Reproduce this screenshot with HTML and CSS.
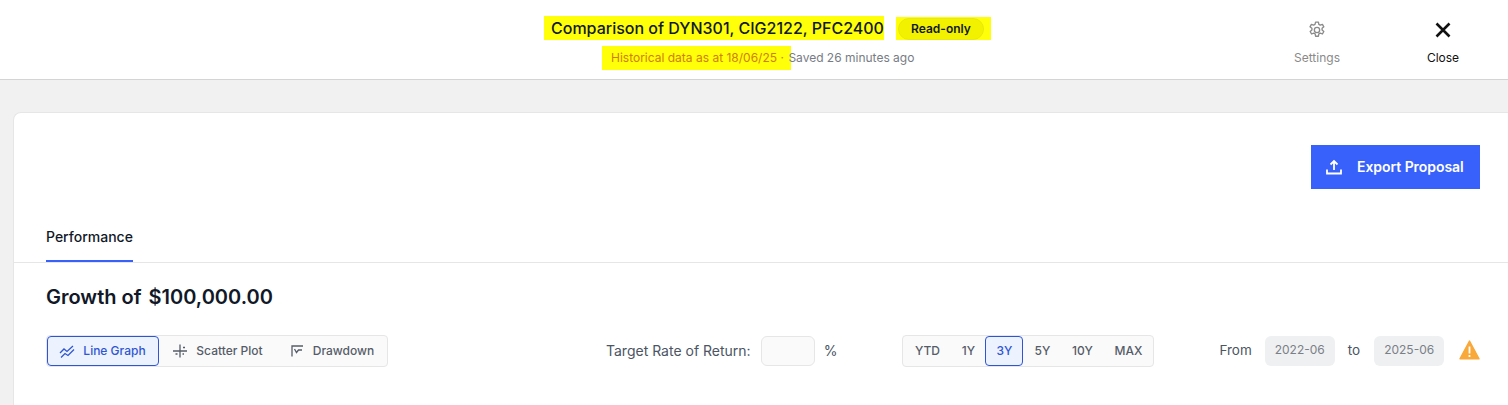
FILE: index.html
```html
<!DOCTYPE html>
<html lang="en">
<head>
  <meta charset="UTF-8">
  <meta name="viewport" content="width=device-width, initial-scale=1.0">
  <title>Comparison</title>
  <link rel="stylesheet" href="styles.css">
</head>
<body>
  <header class="topbar">
    <div class="topbar-center">
      <div class="title-row">
        <h1 class="title marker">Comparison of DYN301, CIG2122, PFC2400</h1>
        <span class="badge-mark marker"><span class="badge">Read-only</span></span>
      </div>
      <div class="subline">
        <span class="historic marker">Historical data as at 18/06/25 ·</span><span class="saved"> Saved 26 minutes ago</span>
      </div>
    </div>
    <div class="topbar-actions">
      <button class="action action-muted">
        <svg width="20" height="20" viewBox="0 0 24 24" fill="none" stroke="currentColor" stroke-width="1.600" stroke-linejoin="round">
          <path d="M10.300 2.500h3.400l.5 2.800 1.700.9 2.600-1 1.700 3-2.100 1.800v2l2.100 1.800-1.700 3-2.600-1-1.700.9-.5 2.800h-3.400l-.5-2.800-1.700-.9-2.600 1-1.700-3 2.100-1.800v-2L3.600 8.200l1.700-3 2.600 1 1.700-.9z"/>
          <circle cx="12" cy="12" r="3.200"/>
        </svg>
        <span>Settings</span>
      </button>
      <button class="action">
        <svg width="20" height="20" viewBox="0 0 20 20" fill="none" stroke="currentColor" stroke-width="2.600">
          <path d="M3.500 3.500l13 13M16.500 3.500l-13 13"/>
        </svg>
        <span>Close</span>
      </button>
    </div>
  </header>

  <main class="card">
    <div class="card-top">
      <button class="export-button">
        <svg width="16" height="16" viewBox="0 0 16 16" fill="none" stroke="currentColor" stroke-width="1.800">
          <path d="M8 11V2.500M4.500 5.500L8 2l3.500 3.500M1 10.500v4h14v-4"/>
        </svg>
        Export Proposal
      </button>
    </div>

    <nav class="tabs">
      <a class="tab">Performance</a>
    </nav>

    <section class="panel">
      <h2 class="panel-title">Growth of <span class="amount">$100,000.00</span></h2>
      <div class="controls">
        <div class="segment chart-types">
          <button class="segment-item active">
            <svg width="16" height="16" viewBox="0 0 16 16" fill="none" stroke="currentColor" stroke-width="1.300">
              <path d="M1 10l4-4 3 2.500L14 3M2 14.500l4-4 3 2 6-6"/>
            </svg>
            Line Graph
          </button>
          <button class="segment-item">
            <svg width="16" height="16" viewBox="0 0 16 16" fill="none" stroke="currentColor" stroke-width="1.300">
              <path d="M1 8h14M8 1.500v13M11 4.500h2M3.500 11h2M10.500 11h1.500"/>
            </svg>
            Scatter Plot
          </button>
          <button class="segment-item">
            <svg width="16" height="16" viewBox="0 0 16 16" fill="none" stroke="currentColor" stroke-width="1.300">
              <path d="M3 13.500V3h11M5.500 6l2 3.500L9.500 7H13"/>
            </svg>
            Drawdown
          </button>
        </div>

        <div class="target">
          <label class="control-label target-label" for="targetRate">Target Rate of Return:</label>
          <input class="target-input" id="targetRate" type="text">
          <span class="control-label target-label">%</span>
        </div>

        <div class="segment ranges">
          <button class="segment-item range-ytd">YTD</button>
          <button class="segment-item range-1y">1Y</button>
          <button class="segment-item active">3Y</button>
          <button class="segment-item">5Y</button>
          <button class="segment-item range-10y">10Y</button>
          <button class="segment-item range-max">MAX</button>
        </div>

        <div class="dates">
          <span class="control-label">From</span>
          <span class="date-box">2022-06</span>
          <span class="control-label">to</span>
          <span class="date-box">2025-06</span>
          <svg class="warn" width="21" height="20" viewBox="0 0 21 20">
            <path d="M10.500 1L20 18.800H1z" fill="#f9a83a" stroke="#f9a83a" stroke-width="1.400" stroke-linejoin="round"/>
            <path d="M10.500 6.500v7M10.500 15v2" stroke="#fff" stroke-width="1.800"/>
          </svg>
        </div>
      </div>
    </section>
  </main>
</body>
</html>
```

FILE: styles.css
```css
* { box-sizing: border-box; }
body {
  margin: 0; height: 405px; overflow: hidden; background-color: #f1f1f1;
  font-family: Inter, Arial, sans-serif; color: #111827; }
button { font-family: inherit; background: none; border: none; padding: 0; }

.topbar {
  height: 80px; background: white; border-bottom: 1px solid #d4d4d4;
  display: flex; justify-content: space-between; padding-left: 544px; }
.topbar-center { display: flex; flex-direction: column; align-items: flex-start; padding-top: 16px; }
.title-row { display: flex; align-items: center; gap: 12px; height: 24px; }
.marker { background-color: #ffff0a; }
.title {
  margin: 0; padding: 0 0 0 7px; width: 340px; height: 24px;
  font-size: 16px; font-weight: 500; line-height: 24px; white-space: nowrap; }
.badge-mark { display: flex; width: 95px; height: 23px; padding: 1px 0 0 2px; }
.badge {
  width: 86px; height: 22px; border-radius: 11px; background: #f2f200; border: 1px solid #e9e90a;
  font-size: 12px; font-weight: 600; line-height: 20px; text-align: center; }
.subline { display: flex; margin: 6px 0 0 58px; font-size: 12px; line-height: 24px; white-space: nowrap; }
.historic { width: 189px; padding-left: 9px; color: #d0800a; }
.saved { white-space: pre; color: #777c85; margin-left: -6px; }

.topbar-actions { display: flex; padding-right: 2px; padding-top: 20px; }
.action {
  width: 126px; display: flex; flex-direction: column; align-items: center; gap: 10px;
  font-size: 12px; line-height: 16px; color: #111; }
.action-muted { color: #8a8a8a; }

.card {
  height: 293px; margin: 32px 0 0 13px; background: white;
  border: 1px solid #e6e6e6; border-right: none; border-bottom: none; border-radius: 8px 0 0 0; }
.card-top { display: flex; justify-content: flex-end; padding: 32px 28px 0 0; }
.export-button {
  width: 169px; height: 44px; background: #3861fb; color: white;
  display: flex; align-items: center; gap: 15px; padding: 0 1px 1px 15px;
  font-size: 14px; font-weight: 600; letter-spacing: -.05px; }

.tabs { margin-top: 29px; height: 45px; padding-left: 32px; border-bottom: 1px solid #e6e6e6; }
.tab {
  display: inline-block; height: 44px; padding-top: 9px; border-bottom: 2px solid #3861fb;
  font-size: 14px; font-weight: 500; line-height: 20px; color: #111827; }

.panel { padding: 0 28px 0 32px; }
.panel-title { margin: 22px 0 0; font-size: 20px; font-weight: 600; line-height: 24px; }
.amount { margin-left: 2px; }
.controls { display: flex; align-items: center; margin-top: 26px; height: 32px; }

.segment { display: flex; height: 32px; background: #fafafa; border: 1px solid #e6e6e6; border-radius: 4px; }
.segment-item {
  display: flex; align-items: center; justify-content: center; gap: 8px; flex: none;
  height: 30px; padding-bottom: 1px; color: #555c68; font-size: 12px; font-weight: 500; white-space: nowrap; }
.segment-item.active { background: #ecf2fe; color: #3056d3; border: 1px solid #2f55d4; border-radius: 4px; }
.chart-types { width: 342px; }
.chart-types .segment-item { width: 118px; padding-right: 1px; }
.chart-types .segment-item.active { width: 112px; }
.chart-types .segment-item:last-child { width: 110px; }

.target { display: flex; align-items: center; margin-left: 218px; }
.control-label { font-size: 13.5px; line-height: 16px; margin-bottom: 2px; color: #4b5563; white-space: nowrap; }
.target-label { font-size: 14px; margin-bottom: 0; }
.target-input {
  width: 54px; height: 30px; margin: 0 9px 0 10px; background: #fafafa;
  border: 1px solid #e6e6e6; border-radius: 6px; }

.ranges { margin-left: 65px; width: 252px; }
.ranges .segment-item { width: 38px; }
.ranges .range-ytd { width: 48px; }
.ranges .range-1y { width: 34px; }
.ranges .range-10y { width: 42px; }
.ranges .range-max { width: 50px; }

.dates { display: flex; align-items: center; margin-left: 65px; }
.date-box {
  width: 70px; height: 30px; margin: 0 13px; background: #eff0f2; border-radius: 6px;
  font-size: 12px; line-height: 28px; text-align: center; color: #7b7f87; }
.dates .date-box + .control-label + .date-box { margin: 0 15px 0 14px; }
.warn { flex: none; margin-bottom: 2px; }
```
